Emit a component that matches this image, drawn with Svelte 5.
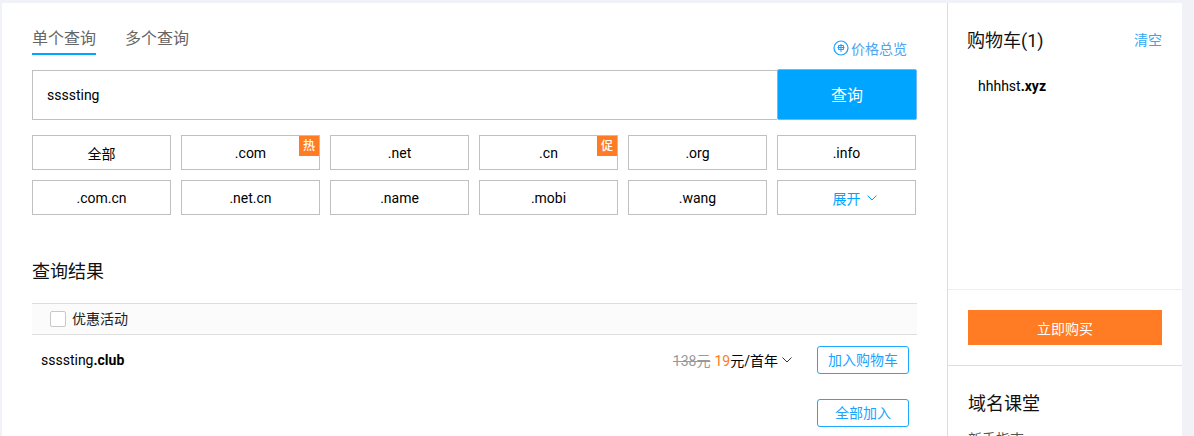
<script>
  const row1 = [
    { label: '全部' },
    { label: '.com', badge: '热' },
    { label: '.net' },
    { label: '.cn', badge: '促' },
    { label: '.org' },
    { label: '.info' }
  ];
  const row2 = ['.com.cn', '.net.cn', '.name', '.mobi', '.wang'];
</script>

<div class="page">
  <main class="main">
    <div class="tabbar">
      <div class="tabs">
        <span class="tab active">单个查询</span>
        <span class="tab">多个查询</span>
      </div>
      <a class="overview">
        <svg width="16" height="16" viewBox="0 0 16 16" fill="none" stroke="#1a9fff" stroke-width="1.2">
          <circle cx="8" cy="8" r="7" />
          <path d="M5.5 5.5h5v4h-5zM8 4v8M4.5 7.5h7" stroke-width="1" />
        </svg>
        价格总览
      </a>
    </div>

    <div class="search">
      <div class="input">ssssting</div>
      <button class="go">查询</button>
    </div>

    <div class="chips">
      {#each row1 as c}
        <div class="chip">
          {c.label}
          {#if c.badge}<span class="badge">{c.badge}</span>{/if}
        </div>
      {/each}
      {#each row2 as c}
        <div class="chip">{c}</div>
      {/each}
      <div class="chip more">
        展开
        <svg width="10" height="6" viewBox="0 0 10 6" fill="none" stroke="#00a5ff"><path d="M.5.5 5 5 9.5.5" /></svg>
      </div>
    </div>

    <h2 class="result-title">查询结果</h2>

    <div class="filter">
      <span class="check"></span>
      <span class="filter-label">优惠活动</span>
    </div>

    <div class="row">
      <span class="domain">ssssting<b>.club</b></span>
      <div class="price">
        <s>138元</s>
        <span class="now"><em>19</em>元/首年</span>
        <svg width="10" height="6" viewBox="0 0 10 6" fill="none" stroke="#333"><path d="M.5.5 5 5 9.5.5" /></svg>
      </div>
      <button class="outline">加入购物车</button>
    </div>

    <div class="addall">
      <button class="outline">全部加入</button>
    </div>
  </main>

  <aside class="side">
    <div class="cart">
      <div class="cart-head">
        <h3>购物车(1)</h3>
        <a class="clear">清空</a>
      </div>
      <div class="cart-item">hhhhst<b>.xyz</b></div>
    </div>
    <div class="buy">
      <button class="buy-btn">立即购买</button>
    </div>
    <div class="school">
      <h3>域名课堂</h3>
      <p>新手指南</p>
    </div>
  </aside>
</div>

<style>
  :global(body) {
    margin: 0;
    background: #f0f2f7;
    overflow: hidden;
  }
  .page {
    box-sizing: border-box;
    width: 1180px;
    height: 433px;
    margin: 3px 0 0 2px;
    display: flex;
    background: #fff;
    overflow: hidden;
    font-family: Roboto, "Noto Sans CJK SC", sans-serif;
    font-size: 14px;
    color: #000;
  }
  .main {
    box-sizing: border-box;
    width: 945px;
    flex: none;
    padding: 0 30px;
  }
  .tabbar {
    height: 67px;
    position: relative;
    display: flex;
    justify-content: space-between;
  }
  .tabs {
    display: flex;
    gap: 29px;
    padding-top: 24px;
  }
  .tab {
    box-sizing: border-box;
    height: 28px;
    font-size: 16px;
    line-height: 24px;
    color: #666;
    width: 64px;
    white-space: nowrap;
  }
  .tab.active {
    border-bottom: 2px solid #00a5ff;
  }
  .overview {
    display: flex;
    align-items: center;
    gap: 2px;
    height: 20px;
    margin-top: 35px;
    margin-right: 10px;
    color: #4da3f0;
    font-size: 14px;
  }
  .search {
    display: flex;
    height: 50px;
  }
  .input {
    box-sizing: border-box;
    flex: 1;
    height: 50px;
    border: 1px solid #c0c0c0;
    border-right: none;
    padding-left: 14px;
    line-height: 49px;
    font-size: 14px;
    color: #000;
  }
  .go {
    width: 140px;
    height: 51px;
    margin-top: -1px;
    border: 1px solid #6fb5ff;
    border-radius: 2px;
    background: #00a5ff;
    color: #fff;
    font: inherit;
    font-size: 16px;
    padding: 0 0 1px;
  }
  .chips {
    display: grid;
    grid-template-columns: repeat(6, 139px);
    grid-auto-rows: 35px;
    gap: 10px;
    margin-top: 15px;
  }
  .chip {
    box-sizing: border-box;
    position: relative;
    border: 1px solid #c0c0c0;
    display: flex;
    align-items: center;
    justify-content: center;
    gap: 6px;
    font-size: 14px;
    color: #000;
  }
  .more {
    color: #00a5ff;
    padding-left: 16px;
  }
  .badge {
    position: absolute;
    top: 0;
    right: 0;
    width: 20px;
    height: 20px;
    background: #ff7b24;
    color: #fff;
    font-size: 12px;
    font-weight: 500;
    line-height: 20px;
    text-align: center;
  }
  .result-title {
    margin: 43px 0 0;
    font-size: 18px;
    font-weight: 400;
    line-height: 28px;
    color: #111;
  }
  .filter {
    box-sizing: border-box;
    height: 32px;
    margin-top: 17px;
    width: 885px;
    border-top: 1px solid #ddd;
    border-bottom: 1px solid #ddd;
    background: #fbfbfb;
    display: flex;
    align-items: center;
    gap: 6px;
    padding-left: 18px;
    font-size: 14px;
    color: #222;
  }
  .filter-label {
    padding-bottom: 2px;
  }
  .check {
    box-sizing: border-box;
    width: 16px;
    height: 16px;
    border: 1px solid #c8c8c8;
    border-radius: 2px;
    background: #fff;
  }
  .row {
    width: 885px;
    height: 50px;
    display: flex;
    align-items: center;
    padding: 0 8px 0 9px;
    box-sizing: border-box;
  }
  .domain {
    flex: 1;
    font-size: 14px;
    color: #000;
  }
  .price {
    display: flex;
    align-items: center;
    gap: 4px;
    margin-right: 25px;
    font-size: 14px;
  }
  .price s {
    color: #999;
    font-size: 14px;
  }
  .now em {
    font-style: normal;
    color: #ff7b24;
  }
  .outline {
    box-sizing: border-box;
    width: 92px;
    height: 28px;
    padding: 0 0 2px;
    border: 1px solid #1aa9ff;
    border-radius: 3px;
    background: #fff;
    color: #1aa3ff;
    font: inherit;
    font-size: 14px;
  }
  .addall {
    width: 885px;
    box-sizing: border-box;
    padding-right: 8px;
    margin-top: 14px;
    display: flex;
    justify-content: flex-end;
  }
  .side {
    flex: 1;
    box-sizing: border-box;
    border-left: 1px solid #dcdcdc;
    display: flex;
    flex-direction: column;
  }
  .cart {
    box-sizing: border-box;
    flex: none;
    height: 287px;
    border-bottom: 1px solid #eee;
    padding: 0 20px 0 19px;
  }
  .cart-head {
    display: flex;
    justify-content: space-between;
    align-items: center;
    height: 26px;
    margin-top: 23px;
  }
  h3 {
    margin: 0;
    font-size: 18px;
    font-weight: 400;
    color: #111;
  }
  .clear {
    color: #2fa8f5;
    font-size: 14px;
  }
  .cart-item {
    margin: 23px 0 0 11px;
    font-size: 14px;
    line-height: 22px;
    color: #000;
  }
  .buy {
    box-sizing: border-box;
    flex: none;
    height: 76px;
    border-bottom: 1px solid #ddd;
    padding: 20px 20px 0;
  }
  .buy-btn {
    width: 100%;
    height: 35px;
    border: none;
    padding: 0;
    background: #ff7b24;
    color: #fff;
    font: inherit;
    font-size: 14px;
  }
  .school {
    padding: 23px 20px 0;
  }
  .school p {
    margin: 13px 0 0;
    font-size: 14px;
    color: #555;
  }
</style>
